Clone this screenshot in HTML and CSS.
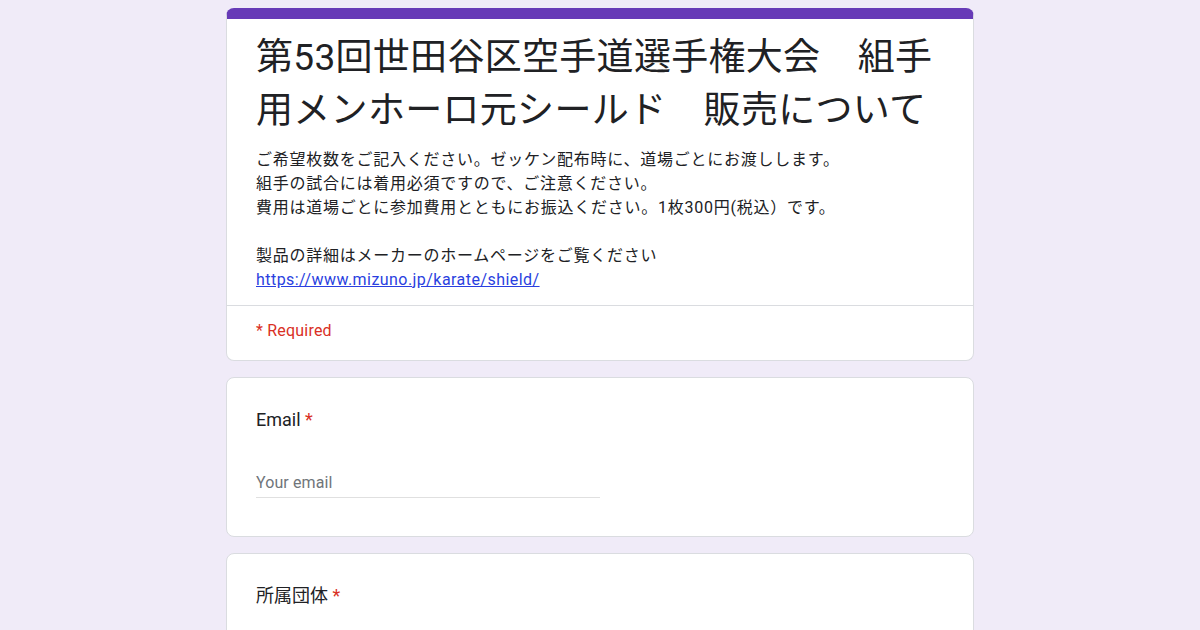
FILE: index.html
```html
<!DOCTYPE html>
<html lang="ja">
<head>
<meta charset="utf-8">
<title>第53回世田谷区空手道選手権大会</title>
<link rel="stylesheet" href="styles.css">
</head>
<body>
<main class="form">
  <section class="card header-card">
    <div class="header-body">
      <h1 class="form-title">第53回世田谷区空手道選手権大会　組手用メンホーロ元シールド　販売について</h1>
      <div class="form-desc">
        <p>ご希望枚数をご記入ください。ゼッケン配布時に、道場ごとにお渡しします。</p>
        <p>組手の試合には着用必須ですので、ご注意ください。</p>
        <p>費用は道場ごとに参加費用とともにお振込ください。1枚300円(税込）です。</p>
        <p class="blank">&nbsp;</p>
        <p>製品の詳細はメーカーのホームページをご覧ください</p>
        <p><a class="link" href="#">https://www.mizuno.jp/karate/shield/</a></p>
      </div>
    </div>
    <div class="required-row">* Required</div>
  </section>

  <section class="card question">
    <div class="q-label">Email <span class="star">*</span></div>
    <div class="q-input"><span class="placeholder">Your email</span></div>
  </section>

  <section class="card question">
    <div class="q-label">所属団体 <span class="star">*</span></div>
  </section>
</main>
</body>
</html>
```

FILE: styles.css
```css
* { box-sizing: border-box; }
html, body { margin: 0; padding: 0; }
body {
  background: #f0ebf8;
  font-family: Roboto, "Noto Sans CJK JP", sans-serif;
  color: #202124;
}
.form {
  width: 748px;
  margin: 0 auto;
  padding-top: 8px;
  display: flex;
  flex-direction: column;
  gap: 16px;
}
.card {
  background: #fff;
  border: 1px solid #dadce0;
  border-radius: 8px;
}
.header-card {
  border-top: 11px solid #673ab7;
}
.header-body {
  padding: 12px 29px 13px;
}
.form-title {
  margin: 0;
  font-size: 37px;
  line-height: 53px;
  font-weight: 400;
  letter-spacing: 0.3px;
}
.form-desc {
  margin-top: 11px;
  font-size: 16px;
  line-height: 24px;
  letter-spacing: 0.75px;
}
.form-desc p { margin: 0; }
.link {
  color: #2a3fe0;
  text-decoration: underline;
  letter-spacing: 0.45px;
}
.required-row {
  border-top: 1px solid #dadce0;
  padding: 13px 29px 17px;
  font-size: 16px;
  line-height: 24px;
  color: #d93025;
  letter-spacing: 0.2px;
}
.question {
  padding: 30px 29px 38px;
}
.q-label {
  font-size: 18px;
  line-height: 24px;
}
.star { color: #d93025; }
.q-input {
  margin-top: 39px;
  width: 50%;
  border-bottom: 1px solid #e0e0e0;
  padding-bottom: 2px;
  font-size: 16px;
  line-height: 24px;
}
.placeholder { color: #70757a; letter-spacing: 0.1px; }
```
